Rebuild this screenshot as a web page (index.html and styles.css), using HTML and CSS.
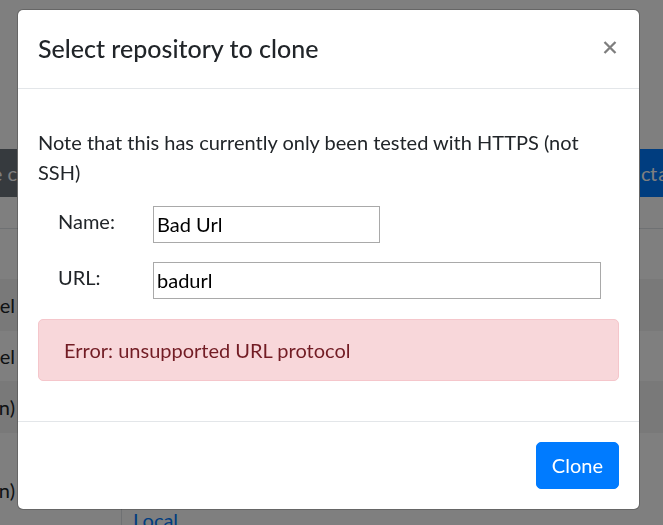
FILE: index.html
```html
<!DOCTYPE html>
<html lang="en">
<head>
<meta charset="utf-8">
<title>Select repository to clone</title>
<link rel="stylesheet" href="styles.css">
</head>
<body>
<div class="page">
  <div class="toolbar">
    <div class="tb-btn tb-left">Create c</div>
    <div class="tb-btn tb-right">ct all</div>
  </div>
  <div class="ptable">
    <div class="prow head"></div>
    <div class="prow r1 striped"><div class="c1">Model</div></div>
    <div class="prow r2"><div class="c1">Model</div></div>
    <div class="prow r3 striped"><div class="c1">(main)</div></div>
    <div class="prow r4">
      <div class="c1 c1-low">(main)</div>
      <div class="c2"><a class="plink" href="#">Local</a></div>
    </div>
  </div>
</div>

<div class="backdrop">
  <div class="dialog">
    <div class="dialog-header">
      <h5 class="dialog-title">Select repository to clone</h5>
      <button class="close" type="button" aria-label="Close">
        <svg width="14" height="13" viewBox="0 0 14 13"><path d="M1.5 1 L12.5 12 M12.5 1 L1.5 12" stroke="#000" stroke-width="2.3" stroke-linecap="butt" fill="none"/></svg>
      </button>
    </div>
    <div class="dialog-body">
      <p class="note">Note that this has currently only been tested with HTTPS (not SSH)</p>
      <div class="form-grid">
        <label class="flabel" for="name">Name:</label>
        <input class="finput finput-name" id="name" type="text" value="Bad Url">
        <label class="flabel" for="url">URL:</label>
        <input class="finput finput-url" id="url" type="text" value="badurl">
      </div>
      <div class="alert">Error: unsupported URL protocol</div>
    </div>
    <div class="dialog-footer">
      <button class="btn-primary" type="button">Clone</button>
    </div>
  </div>
</div>
</body>
</html>
```

FILE: styles.css
```css
html, body {
  margin: 0;
  height: 100%;
  overflow: hidden;
}
body {
  font-family: "Segoe UI", Lato, "Noto Sans", sans-serif;
  font-size: 20px;
  line-height: 1.5;
  color: #212529;
  background: #fff;
}

/* background page */
.toolbar {
  display: flex;
  justify-content: space-between;
  margin-top: 149px;
  height: 48px;
}
.tb-btn {
  display: flex;
  align-items: center;
  white-space: nowrap;
  color: #fff;
}
.tb-left {
  width: 17px;
  justify-content: flex-end;
  background: #6c757d;
}
.tb-right {
  box-sizing: border-box;
  width: 23px;
  padding-left: 1px;
  background: #007bff;
  letter-spacing: -0.5px;
  word-spacing: -3px;
}
.ptable {
  margin-top: 31px;
  border-top: 1px solid #dee2e6;
}
.prow {
  display: flex;
  align-items: center;
}
.prow.head { height: 50px; }
.prow.r1 { height: 52px; }
.prow.r2 { height: 50px; }
.prow.r3 { height: 52px; }
.prow.r4 { height: 92px; align-items: flex-start; }
.striped { background: #f2f2f2; }
.c1 {
  width: 15px;
  display: flex;
  justify-content: flex-end;
  white-space: nowrap;
}
.c1-low { margin-top: 42px; }
.c2 {
  margin-left: 106px;
  margin-top: 72px;
  padding-left: 11px;
  border-left: 1px solid #dee2e6;
  height: 40px;
}
.plink {
  color: #007bff;
  text-decoration: none;
}

/* modal */
.backdrop {
  position: fixed;
  inset: 0;
  background: rgba(0, 0, 0, 0.5);
}
.dialog {
  box-sizing: border-box;
  width: 623px;
  margin: 9px 0 0 17px;
  background: #fff;
  background-clip: padding-box;
  border: 1px solid rgba(0, 0, 0, 0.2);
  border-radius: 6px;
}
.dialog-header {
  display: flex;
  align-items: flex-start;
  padding: 20px;
  border-bottom: 1px solid #e3e6e9;
}
.dialog-title {
  margin: 0;
  font-size: 25px;
  font-weight: 500;
  line-height: 1.5;
}
.close {
  margin: 11px 2px 0 auto;
  padding: 0;
  border: 0;
  background: transparent;
  opacity: 0.5;
  cursor: pointer;
}
.close svg { display: block; }

.dialog-body {
  padding: 20px;
}
.note {
  margin: 18px 0 19px;
}
.form-grid {
  display: grid;
  grid-template-columns: 95px auto;
  row-gap: 19px;
  justify-items: start;
  align-items: start;
  padding-left: 20px;
}
.flabel {
  line-height: 30px;
}
.finput {
  box-sizing: border-box;
  height: 37px;
  margin: 0;
  padding: 1px 3px;
  border: 1px solid #a9a9a9;
  border-radius: 0;
  font-family: inherit;
  font-size: 20px;
  color: #000;
  background: #fff;
}
.finput-name { width: 227px; }
.finput-url { width: 448px; }

.alert {
  margin: 20px 0;
  padding: 15px 25px;
  border: 1px solid #f5c6cb;
  border-radius: 5px;
  background: #f8d7da;
  color: #721c24;
}

.dialog-footer {
  display: flex;
  justify-content: flex-end;
  padding: 15px;
  border-top: 1px solid #e3e6e9;
}
.btn-primary {
  margin: 5px;
  padding: 7.5px 15px;
  border: 1px solid #007bff;
  border-radius: 5px;
  background: #007bff;
  color: #fff;
  font-family: inherit;
  font-size: 20px;
  line-height: 30px;
  cursor: pointer;
}
```
